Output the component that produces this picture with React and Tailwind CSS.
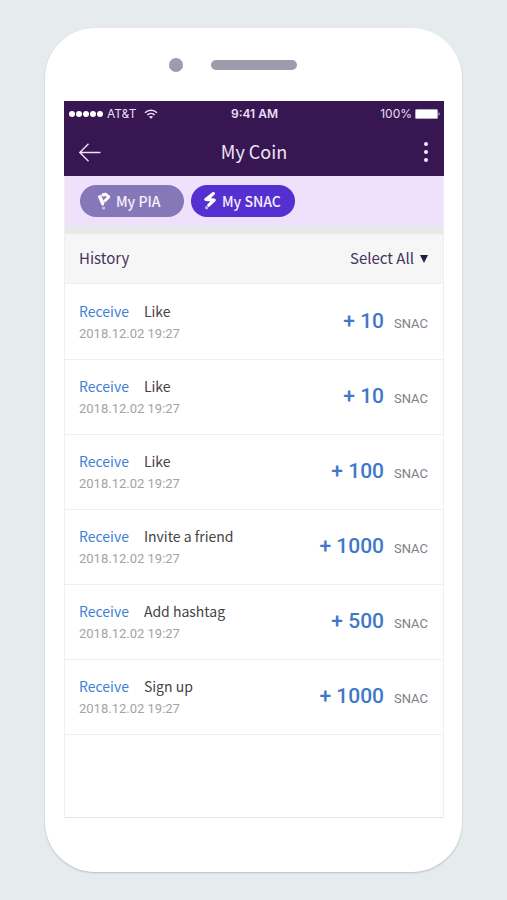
import React from "react";

const entries = [
  { id: 1, title: "Like", amount: 10 },
  { id: 2, title: "Like", amount: 10 },
  { id: 3, title: "Like", amount: 100 },
  { id: 4, title: "Invite a friend", amount: 1000 },
  { id: 5, title: "Add hashtag", amount: 500 },
  { id: 6, title: "Sign up", amount: 1000 },
];

function StatusBar() {
  return (
    <div className="grid h-[26px] grid-cols-[1fr_auto_1fr] items-center pl-[5px] pr-1 font-['Inter',sans-serif] text-xs text-[#eadff5]">
      <div className="flex items-center">
        <div className="flex gap-px">
          {[0, 1, 2, 3, 4].map((dot) => (
            <span key={dot} className="size-[6px] rounded-full bg-white" />
          ))}
        </div>
        <span className="ml-1">AT&amp;T</span>
        <svg className="ml-[8px] h-[10px] w-[14px]" viewBox="0 0 14 10" fill="none" stroke="currentColor" strokeWidth="1.6">
          <path d="M1 3.800C4.300.4 9.700.4 13 3.800" />
          <path d="M3.300 6C5.400 3.900 8.600 3.900 10.700 6" />
          <path d="M7 9.800 4.900 7.700C6 6.600 8 6.600 9.100 7.700Z" fill="currentColor" stroke="none" />
        </svg>
      </div>
      <span className="font-semibold">9:41 AM</span>
      <div className="flex items-center justify-end gap-[3px]">
        <span>100%</span>
        <svg className="h-[10px] w-[25px]" viewBox="0 0 25 10">
          <rect width="23" height="10" rx="1.500" fill="#b9a9cb" />
          <rect x="1" y="1" width="21" height="8" rx="1" fill="#fff" />
          <path d="M23.600 3.200c1.400.6 1.400 3 0 3.600Z" fill="#eadff5" />
        </svg>
      </div>
    </div>
  );
}

function TitleBar() {
  return (
    <div className="grid h-[49px] grid-cols-[1fr_auto_1fr] items-center px-[14px]">
      <button type="button" aria-label="Back" className="w-6 justify-self-start">
        <svg className="h-5 w-6" viewBox="0 0 24 20" fill="none" stroke="#efe2fa" strokeWidth="1.4">
          <path d="M10.500 1.700 1.800 10.500l8.700 8.800M1.800 10.500H22.500" />
        </svg>
      </button>
      <h1 className="pb-0.5 text-lg leading-6 text-[#efe4f8]">My Coin</h1>
      <button type="button" aria-label="More options" className="flex w-2 flex-col items-center gap-1 justify-self-end">
        <span className="size-[4px] rounded-full bg-[#f3e9fb]" />
        <span className="size-[4px] rounded-full bg-[#f3e9fb]" />
        <span className="size-[4px] rounded-full bg-[#f3e9fb]" />
      </button>
    </div>
  );
}

function PiaIcon() {
  return (
    <svg className="h-[18px] w-[14px]" viewBox="0 0 14 18" fill="none">
      <path d="M1 4.200 3.800 3.200 7.200 11 6.200 13.400 4.800 13Z" fill="#fff" stroke="#fff" strokeWidth=".6" strokeLinejoin="round" />
      <path d="M4.800 2.200 6.800 3.200 8.400 2 11.800 4.900 7.200 9.600" stroke="#fff" strokeWidth="2.800" strokeLinejoin="round" />
      <circle cx="6.600" cy="16" r="1.600" fill="#c9bdf0" />
    </svg>
  );
}

function SnacIcon() {
  return (
    <svg className="h-[18px] w-[14px]" viewBox="0 0 14 18" fill="none">
      <path d="M10.400 1.600 2.800 7.400 11.200 8.200 5.800 13.200" stroke="#fff" strokeWidth="3.200" strokeLinecap="round" strokeLinejoin="round" />
      <path d="M10.400 1.600 5.500 7.700 11.200 8.200" stroke="#fff" strokeWidth="2" strokeLinejoin="round" />
      <circle cx="3.600" cy="15.800" r="1.700" fill="#a9b4fa" />
    </svg>
  );
}

function HistoryRow({ title, amount }) {
  return (
    <li className="flex h-[75px] items-center justify-between border-b border-[#efeff0] pl-[14px] pr-[15px]">
      <div>
        <p className="flex gap-[15px] text-sm leading-[22px]">
          <span className="text-[#3f7fd6]">Receive</span>
          <span className="text-[#444446]">{title}</span>
        </p>
        <p className="pt-px font-['Roboto',sans-serif] text-[13px] leading-[22px] text-[#a3a3a5]">2018.12.02 19:27</p>
      </div>
      <p className="flex items-baseline gap-[10px] pb-0.5 font-['Roboto',sans-serif]">
        <span className="text-[21px] font-medium leading-6 text-[#3f78c8]">+ {amount}</span>
        <span className="text-[13px] text-[#808086]">SNAC</span>
      </p>
    </li>
  );
}

export default function App() {
  return (
    <div className="min-h-screen bg-[#e6ebee] px-[45px] py-7 font-['Noto_Sans_CJK_KR',sans-serif]">
      <div className="rounded-[50px] bg-white pb-[54px] pl-[19px] pr-[18px] shadow-[0_1px_2px_rgba(0,0,0,0.2)]">
        <div className="grid h-[73px] grid-cols-[1fr_auto_1fr] items-center gap-7">
          <span className="size-[14px] justify-self-end rounded-full bg-[#9f9bac]" />
          <span className="h-[10px] w-[86px] rounded-full bg-[#9f9bac]" />
        </div>
        <main className="border-b border-[#e6e6e8]">
          <header className="bg-[#371651]">
            <StatusBar />
            <TitleBar />
          </header>
          <div className="border-x border-[#efeff1]">
            <nav className="flex h-[50px] items-center gap-[7px] bg-[#efe1fc] px-[15px]">
              <button type="button" className="flex h-8 w-[104px] items-center gap-[5px] rounded-full bg-[#8677b8] pl-[17px] text-sm font-medium text-[#f6effd]">
                <PiaIcon />
                My PIA
              </button>
              <button type="button" className="flex h-8 w-[104px] items-center gap-[5px] rounded-full bg-[#552fcf] pl-3 text-sm font-medium text-[#f6effd]">
                <SnacIcon />
                My SNAC
              </button>
            </nav>
            <div className="h-2 bg-[#e9e8e9]" />
            <section>
              <div className="flex h-[50px] items-center justify-between border-b border-[#efeff0] bg-[#f6f6f7] pl-[14px] pr-[15px] text-[15px] text-[#44345a]">
                <h2>History</h2>
                <div className="flex items-center gap-[6px]">
                  <select aria-label="Filter history" className="appearance-none bg-transparent [field-sizing:content]">
                    <option>Select All</option>
                    <option>Receive</option>
                  </select>
                  <svg className="pointer-events-none h-[8px] w-[8px]" viewBox="0 0 8 8" fill="#2a1746">
                    <path d="M0 0h8L4 8Z" />
                  </svg>
                </div>
              </div>
              <ul className="pb-[82px] pt-px">
                {entries.map((entry) => (
                  <HistoryRow key={entry.id} title={entry.title} amount={entry.amount} />
                ))}
              </ul>
            </section>
          </div>
        </main>
      </div>
    </div>
  );
}
